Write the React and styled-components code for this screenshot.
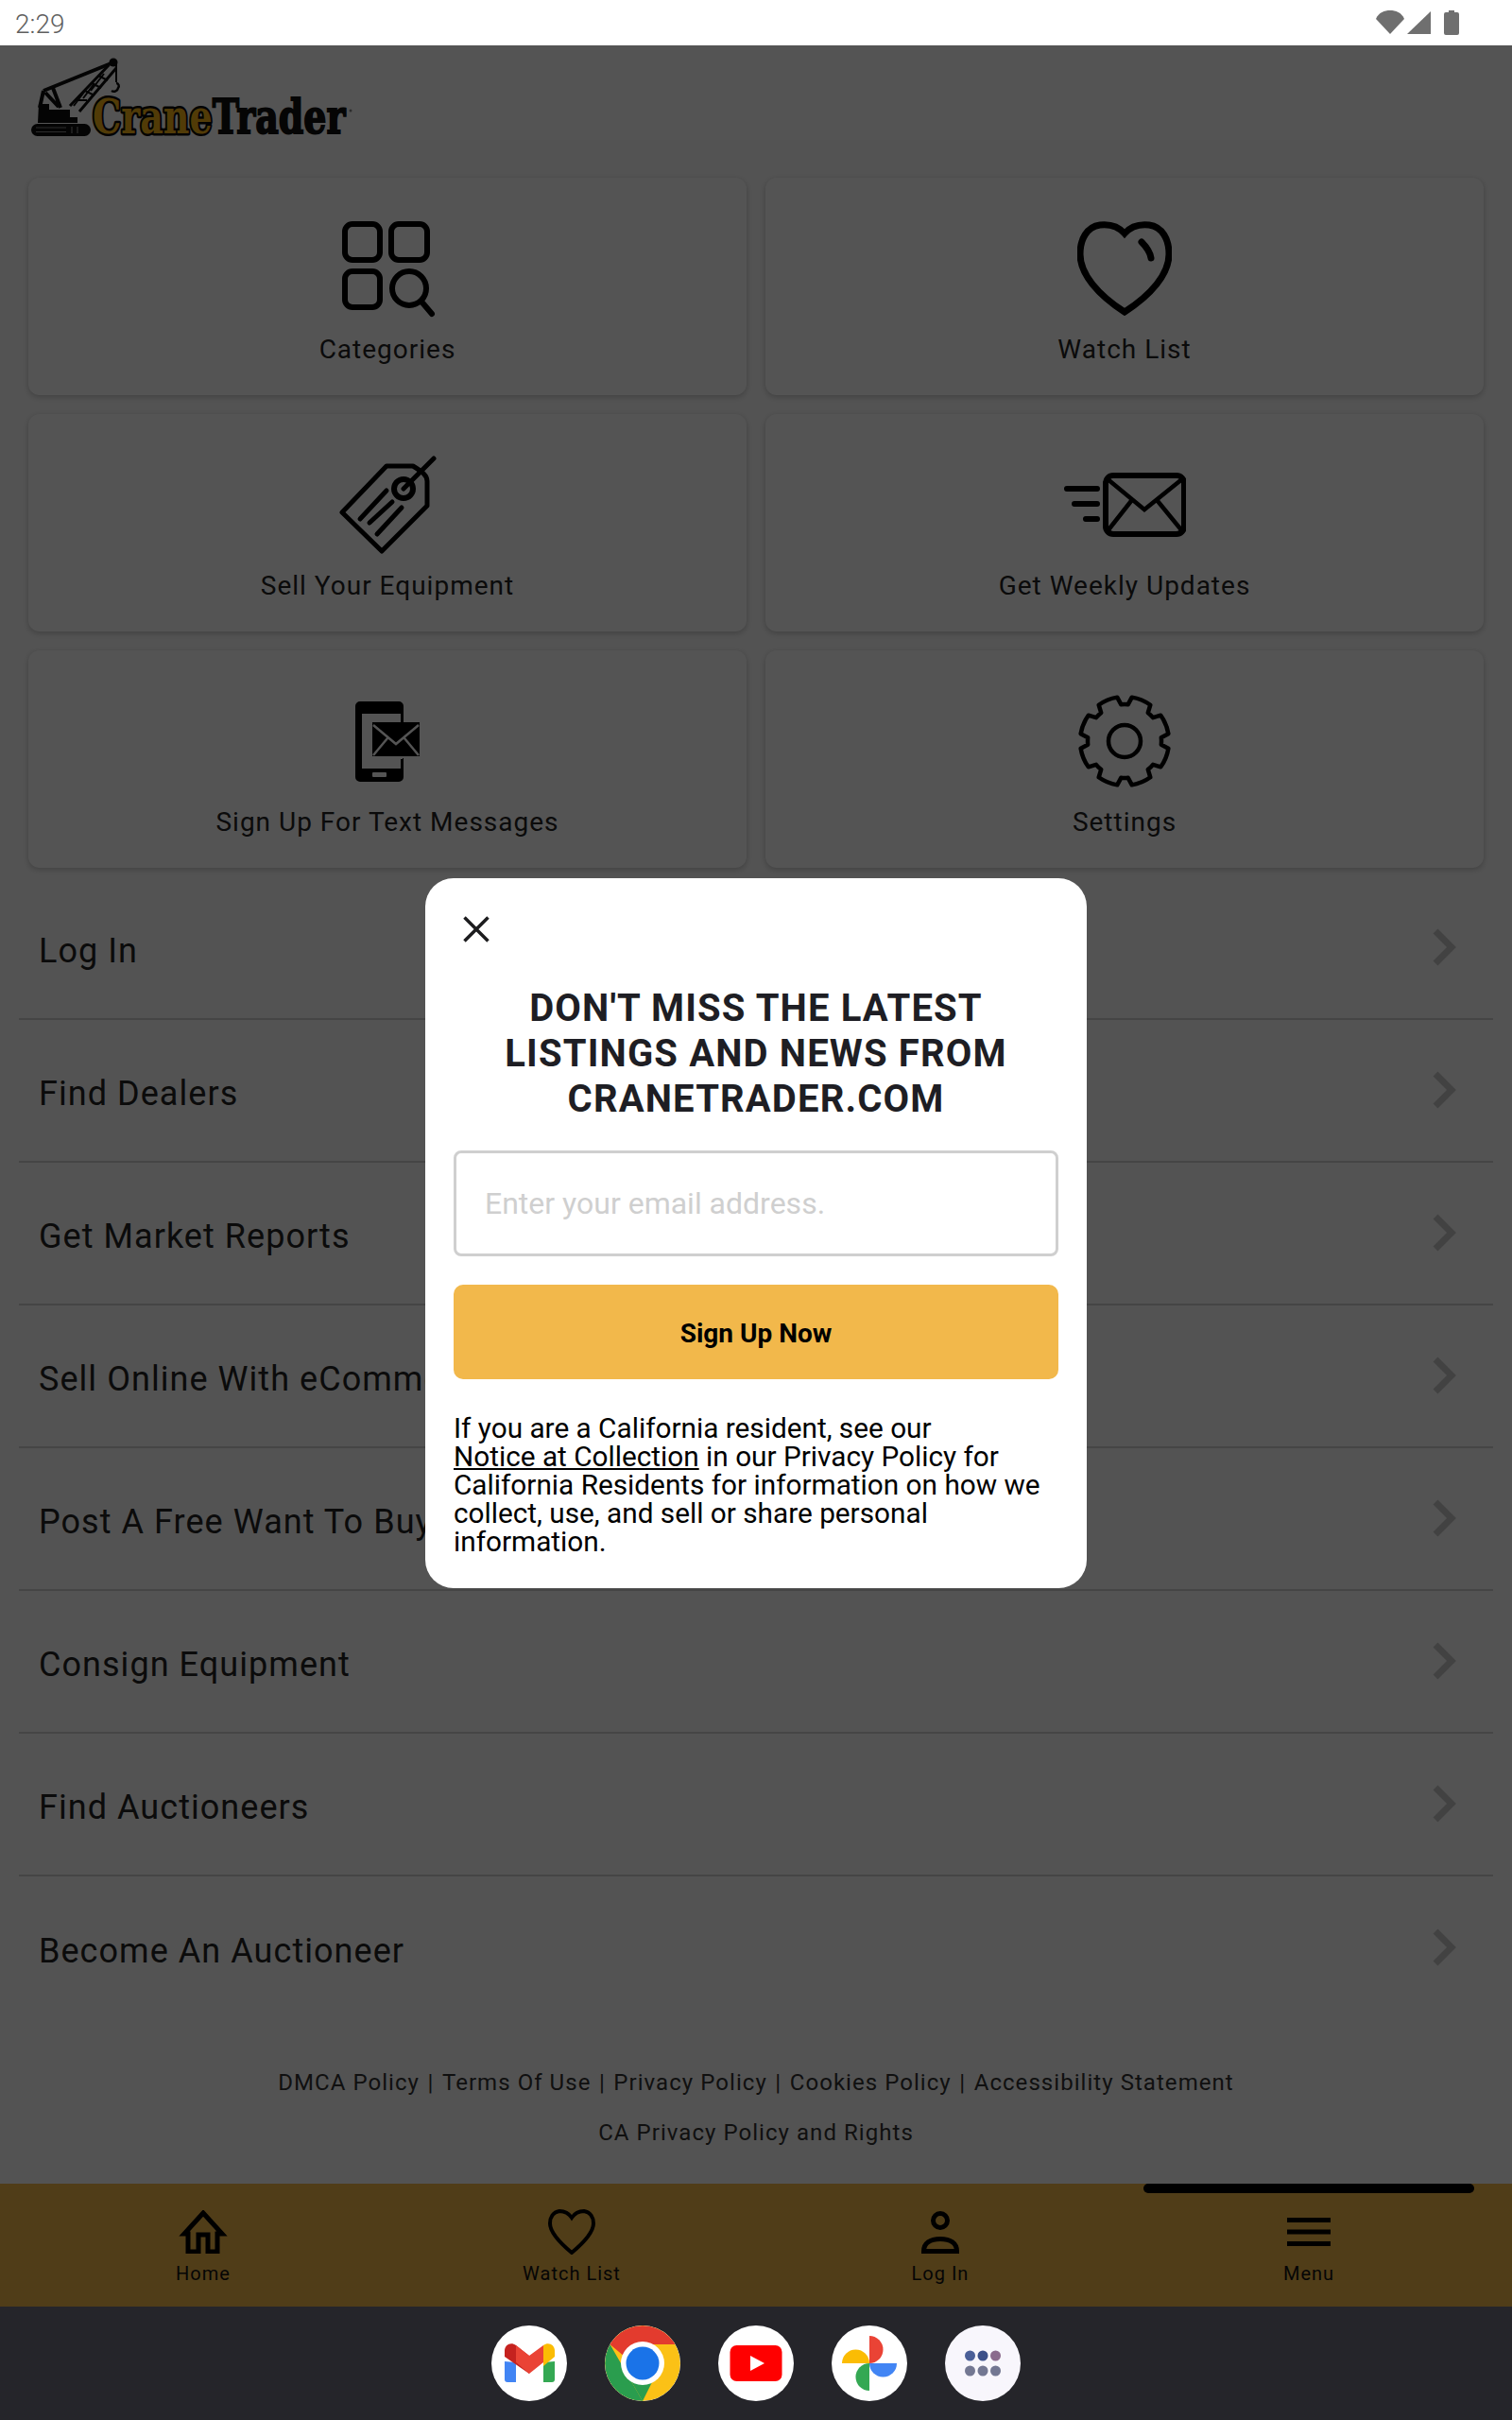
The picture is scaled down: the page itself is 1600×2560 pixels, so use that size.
import React from 'react'
import styled, { createGlobalStyle } from 'styled-components'

const GlobalStyle = createGlobalStyle`
  html, body {
    margin: 0;
    padding: 0;
    background: #25252a;
  }
  * {
    box-sizing: border-box;
  }
  body {
    font-family: Roboto, "Liberation Sans", sans-serif;
  }
`

const Page = styled.div`
  width: 1600px;
  height: 2560px;
  display: flex;
  flex-direction: column;
  overflow: hidden;
`

const StatusBar = styled.div`
  height: 48px;
  flex: none;
  background: #fff;
  display: flex;
  align-items: center;
  justify-content: space-between;
  padding: 0 56px 0 16px;
  color: #5f5f5f;
  font-size: 28px;
  font-weight: 300;
`

const StatusTime = styled.span`
  padding-top: 3px;
`

const Screen = styled.main`
  position: relative;
  height: 2392px;
  flex: none;
  background: #fbfbfb;
  display: flex;
  flex-direction: column;
`

const Header = styled.header`
  height: 100px;
  flex: none;
  background: #fff;
  padding: 12px 0 0 30px;
`

const CardGrid = styled.section`
  display: grid;
  grid-template-columns: 1fr 1fr;
  grid-auto-rows: 230px;
  gap: 20px;
  padding: 40px 30px 10px;
`

const Card = styled.a`
  background: #fff;
  border-radius: 12px;
  box-shadow: 0 2px 6px rgba(0, 0, 0, 0.22);
  padding-top: 46px;
  display: flex;
  flex-direction: column;
  align-items: center;
`

const IconSlot = styled.div`
  height: 100px;
  display: flex;
  align-items: center;
  justify-content: center;
`

const CardLabel = styled.span`
  margin-top: 19px;
  color: #222;
  font-size: 28px;
  line-height: 33px;
  letter-spacing: 1px;
`

const List = styled.ul`
  list-style: none;
  margin: 0;
  padding: 0 20px;
`

const Row = styled.li`
  height: 151px;
  display: flex;
  align-items: center;
  justify-content: space-between;
  padding: 0 38px 1px 21px;
  border-bottom: ${p => (p.$last ? 'none' : '2px solid #d2d2d2')};
  color: #222;
  font-size: 36px;
  letter-spacing: 1.05px;
`

const RowLabel = styled.span`
  padding-top: 7px;
`

const Footer = styled.footer`
  margin-top: 52px;
  display: flex;
  flex-direction: column;
  align-items: center;
  gap: 23px;
  color: #333;
  font-size: 24px;
  line-height: 30px;
  letter-spacing: 1.05px;
`

const FooterLine = styled.div`
  display: flex;
  align-items: center;
`

const Pipe = styled.span`
  margin: 0 8.5px;
`

const TabBar = styled.nav`
  margin-top: auto;
  height: 130px;
  flex: none;
  background: #f2b84b;
  display: grid;
  grid-template-columns: repeat(4, 1fr);
  padding: 0 20px;
`

const Tab = styled.a`
  position: relative;
  display: flex;
  flex-direction: column;
  align-items: center;
  padding-top: 26px;
  color: #111;
  font-size: 20px;
  line-height: 24px;
  letter-spacing: 1px;
`

const ActiveBar = styled.span`
  position: absolute;
  top: 0;
  left: 20px;
  right: 20px;
  height: 10px;
  border-radius: 5px;
  background: #000;
`

const TabIcon = styled.div`
  height: 50px;
  margin-bottom: 7px;
  display: flex;
  align-items: center;
  justify-content: center;
`

const Scrim = styled.div`
  position: absolute;
  inset: 0;
  background: rgba(0, 0, 0, 0.67);
`

const Modal = styled.section`
  position: absolute;
  top: 881px;
  left: 450px;
  width: 700px;
  height: 751px;
  background: #fff;
  border-radius: 30px;
  padding: 40px 30px 0;
`

const CloseButton = styled.button`
  display: block;
  width: 28px;
  height: 28px;
  margin-left: 10px;
  padding: 0;
  border: 0;
  background: none;
`

const Title = styled.h2`
  margin: 46px 0 0;
  color: #1e1e24;
  font-size: 40px;
  line-height: 48px;
  font-weight: 700;
  letter-spacing: 1.15px;
  text-align: center;
`

const EmailInput = styled.input`
  display: block;
  width: 100%;
  height: 112px;
  margin-top: 30px;
  padding: 0 30px;
  border: 3px solid #cfcfcf;
  border-radius: 8px;
  background: #fff;
  font-family: inherit;
  font-size: 32px;
  letter-spacing: 0;
  &::placeholder {
    color: #cfcfcf;
    opacity: 1;
  }
`

const SignUpButton = styled.button`
  display: block;
  width: 100%;
  height: 100px;
  margin-top: 30px;
  padding: 2px 0 0;
  border: 0;
  border-radius: 10px;
  background: #f2b84b;
  color: #000;
  font-family: inherit;
  font-size: 28px;
  font-weight: 700;
`

const Notice = styled.p`
  margin: 37px 0 0;
  color: #000;
  font-size: 29.75px;
  line-height: 30px;
`

const NoticeLink = styled.a`
  display: inline-block;
  text-decoration: underline;
`

const Dock = styled.div`
  flex: 1;
  background: #25252a;
  display: flex;
  align-items: center;
  justify-content: center;
  gap: 40px;
`

const DockIcon = styled.div`
  width: 80px;
  height: 80px;
  border-radius: 50%;
  overflow: hidden;
  background: ${p => p.$bg || '#fff'};
`

const LogoText = styled.text`
  font-family: "DejaVu Serif", "Liberation Serif", serif;
  font-weight: 700;
  font-size: 50px;
`

const StatusIcons = () => (
  <svg width="90" height="30" viewBox="0 0 90 30">
    <path d="M2 11 C5 4 11 2 17 2 C23 2 29 4 32 11 L17 27 Z" fill="#6f6f6f" />
    <path d="M35 27 L60 3 V27 Z" fill="#6f6f6f" />
    <path d="M74 6 a2 2 0 0 1 2 -2 h3 v-2 h6 v2 h3 a2 2 0 0 1 2 2 v20 a2 2 0 0 1 -2 2 h-12 a2 2 0 0 1 -2 -2 Z" fill="#6f6f6f" />
  </svg>
)

const Logo = () => (
  <svg width="345" height="85" viewBox="0 0 345 85">
    <g stroke="#0d0d0d" fill="none">
      <path d="M16 36 L90 6" strokeWidth="4" />
      <path d="M44 52 L85 9 M54 58 L93 12" strokeWidth="3" />
      <path d="M50 46 L62 46 M60 36 L70 41 M67 28 L77 33 M74 20 L84 25 M48 52 L60 36 M58 44 L70 28 M66 36 L80 18" strokeWidth="2" />
      <path d="M16 36 L12 54 M18 38 L32 53 M26 33 L34 54" strokeWidth="4" />
      <path d="M93 7 V27" strokeWidth="2" />
      <path d="M93 28 a3 3 0 0 1 2 5 a4.5 4.5 0 0 1 -7 3" strokeWidth="2.5" />
    </g>
    <circle cx="90" cy="6" r="4.5" fill="#0d0d0d" />
    <path d="M11 50 H22 V56 H44 V64 H52 V70 H10 Z" fill="#0d0d0d" />
    <rect x="3" y="71" width="63" height="13" rx="6.5" fill="#0d0d0d" />
    <path d="M8 75 H40 M8 79.500 H40 M46 74 V81 M52 74 V81" stroke="#888" strokeWidth="1.2" />
    <LogoText transform="translate(68 81) scale(.76 1)">
      <tspan fill="#f5b318" stroke="#0b0b0b" strokeWidth="5" paintOrder="stroke" strokeLinejoin="round">Crane</tspan>
      <tspan fill="#111" stroke="#111" strokeWidth="2">Trader</tspan>
    </LogoText>
    <circle cx="341" cy="57" r="1.5" fill="#888" />
  </svg>
)

const CategoriesIcon = () => (
  <svg width="104" height="104" viewBox="0 0 104 104" fill="none" stroke="#000" strokeWidth="6">
    <rect x="7" y="5" width="37" height="38" rx="8" />
    <rect x="56" y="5" width="38" height="38" rx="8" />
    <rect x="7" y="55" width="37" height="38" rx="8" />
    <circle cx="75" cy="73" r="18" />
    <path d="M88 87 L99 100" strokeLinecap="round" />
  </svg>
)

const HeartIcon = () => (
  <svg width="100" height="100" viewBox="0 0 100 100" fill="none" stroke="#000" strokeWidth="7">
    <path d="M50 13 C43 5 33 3 24 4 C10 6 3 19 3 35 C3 56 22 78 50 96 C78 78 97 56 97 35 C97 19 90 6 76 4 C67 3 57 5 50 13 Z" />
    <path d="M68 22 C73 27 77 32 78 39" strokeLinecap="round" />
  </svg>
)

const TagIcon = () => (
  <svg width="104" height="104" viewBox="0 0 104 104" fill="none" stroke="#000" strokeWidth="5" strokeLinejoin="round">
    <path d="M4 60 L46 101 L94 53 V27 C94 21 89 17 79 11 L51 11 Z" />
    <circle cx="69" cy="35" r="10" strokeWidth="6" />
    <path d="M69 35 L101 3" strokeLinecap="round" strokeWidth="5" />
    <path d="M23 67 L51 37 M33 71 L57 49 M41 83 L67 55" strokeLinecap="round" />
  </svg>
)

const MailFastIcon = () => (
  <svg width="130" height="70" viewBox="0 0 130 70" fill="none" stroke="#000" strokeWidth="6">
    <rect x="45" y="4" width="83" height="62" rx="8" />
    <path d="M46 7 L86 40 L127 7 M46 64 L72 31 M127 64 L100 31" strokeWidth="4.5" />
    <path d="M4 18 H36 M12 34 H36 M24 50 H36" strokeLinecap="round" strokeWidth="6" />
  </svg>
)

const PhoneMailIcon = () => (
  <svg width="80" height="88" viewBox="0 0 80 88" fill="none">
    <path d="M11 2 H52 a5 5 0 0 1 5 5 V82 a5 5 0 0 1 -5 5 H11 a5 5 0 0 1 -5 -5 V7 a5 5 0 0 1 5 -5 Z M13 15 V73 H54 V15 Z" fill="#000" fillRule="evenodd" />
    <rect x="48" y="24" width="8" height="39" fill="#fff" />
    <rect x="24" y="16" width="26" height="10" fill="#fff" />
    <rect x="24" y="26" width="50" height="34" fill="#000" />
    <path d="M25 27 L49 47 L73 27 M25 59 L40 41 M73 59 L58 41" stroke="#fff" strokeWidth="2.5" />
    <rect x="24" y="60" width="50" height="2" fill="#fff" />
    <rect x="24" y="24" width="50" height="2" fill="#000" />
    <rect x="24" y="77" width="15" height="5" rx="1" fill="#fff" />
  </svg>
)

// 8 tooth outline, tips are arcs and the notches sit on the axes
const gearPath = () => {
  const pt = (r, deg) => {
    const a = (deg * Math.PI) / 180
    return `${(50 + r * Math.cos(a)).toFixed(2)} ${(50 + r * Math.sin(a)).toFixed(2)}`
  }
  let d = ''
  for (let i = 0; i < 8; i++) {
    const c = i * 45 + 22.5
    d += `${i === 0 ? 'M' : 'L'}${pt(39, c - 17)} L${pt(47, c - 13)} A47 47 0 0 1 ${pt(47, c + 13)} L${pt(39, c + 17)} A39 39 0 0 1 ${pt(39, c + 28)} `
  }
  return d + 'Z'
}

const GearIcon = () => (
  <svg width="100" height="100" viewBox="0 0 100 100" fill="none" stroke="#000" strokeWidth="4.500" strokeLinejoin="round">
    <path d={gearPath()} />
    <circle cx="50" cy="50" r="17" />
  </svg>
)

const Chevron = () => (
  <svg width="26" height="40" viewBox="0 0 26 40" fill="none" stroke="#c8c8c8" strokeWidth="7">
    <path d="M3 3 L20 20 L3 37" />
  </svg>
)

const HomeTabIcon = () => (
  <svg width="52" height="46" viewBox="0 0 52 46" fill="none" stroke="#000" strokeWidth="5">
    <path d="M26 3 L46 25 H41 V44 H31 V26 H21 V44 H10 V25 H6 Z" />
  </svg>
)

const HeartTabIcon = () => (
  <svg width="52" height="48" viewBox="0 0 52 48" fill="none" stroke="#000" strokeWidth="4">
    <path d="M26 9 C22 3 17 2 13 2 C6 3 3 9 3 15 C3 25 14 36 26 46 C38 36 49 25 49 15 C49 9 46 3 39 2 C35 2 30 3 26 9 Z" />
  </svg>
)

const PersonTabIcon = () => (
  <svg width="42" height="46" viewBox="0 0 42 46" fill="none" stroke="#000" strokeWidth="5">
    <circle cx="21" cy="11" r="7.5" />
    <path d="M3.5 43.5 C3.5 35 10 30.500 21 30.500 C32 30.500 38.500 35 38.500 43.5 Z" />
  </svg>
)

const MenuTabIcon = () => (
  <svg width="46" height="30" viewBox="0 0 46 30" fill="#000">
    <rect width="46" height="5" />
    <rect y="12.500" width="46" height="5" />
    <rect y="25" width="46" height="5" />
  </svg>
)

const CloseIcon = () => (
  <svg width="28" height="28" viewBox="0 0 28 28" fill="none" stroke="#1c1c1e" strokeWidth="3.5">
    <path d="M1.500 1.500 L26.500 26.500 M26.500 1.500 L1.500 26.500" />
  </svg>
)

const GmailIcon = () => (
  <svg width="80" height="80" viewBox="0 0 80 80">
    <path d="M14 38 V57 a3 3 0 0 0 3 3 H26 V39 Z" fill="#4285f4" />
    <path d="M55 39 V60 H64 a3 3 0 0 0 3 -3 V38 Z" fill="#34a853" />
    <path d="M14 27 C14 20 21 17 26 21 L40 32 L40 51 L14 33 Z" fill="#c5221f" />
    <path d="M26 21 L40 32 L55 21 V39 L40 51 L26 39 Z" fill="#ea4335" />
    <path d="M55 21 C60 17 67 20 67 27 V33 L55 43 Z" fill="#fbbc04" />
  </svg>
)

const ChromeIcon = () => (
  <svg width="80" height="80" viewBox="0 0 80 80">
    <circle cx="40" cy="40" r="40" fill="#fbc116" />
    <path d="M5.500 20 A40 40 0 0 1 74.500 20 H40 A20 20 0 0 0 21 33 Z" fill="#e33b2e" />
    <path d="M5.500 20 L21 47 L40 80 A40 40 0 0 1 5.500 20 Z" fill="#2a9d4e" />
    <path d="M21 47 A22 22 0 0 0 50 60 L40 80 Z" fill="#2a9d4e" />
    <circle cx="40" cy="40" r="23" fill="#fff" />
    <circle cx="40" cy="40" r="17.500" fill="#1a73e8" />
  </svg>
)

const YoutubeIcon = () => (
  <svg width="80" height="80" viewBox="0 0 80 80">
    <rect x="12.500" y="21" width="55" height="38" rx="7" fill="#f00" />
    <path d="M34 32 L49 40 L34 48 Z" fill="#fff" />
  </svg>
)

const PhotosIcon = () => (
  <svg width="80" height="80" viewBox="0 0 80 80">
    <path d="M40 11 A14.500 14.500 0 0 1 40 40 Z" fill="#ea4335" />
    <path d="M11 40 A14.500 14.500 0 0 1 40 40 Z" fill="#fbbc04" />
    <path d="M40 40 H69 A14.500 14.500 0 0 1 40 40 Z" fill="#4285f4" />
    <path d="M40 69 A14.500 14.500 0 0 1 40 40 Z" fill="#34a853" />
  </svg>
)

const AppsIcon = () => (
  <svg width="80" height="80" viewBox="0 0 80 80">
    <circle cx="26.500" cy="32" r="5.500" fill="#4a5f98" />
    <circle cx="40" cy="32" r="5.500" fill="#3c5089" />
    <circle cx="53.500" cy="32" r="5.500" fill="#8b6b8d" />
    <circle cx="26.500" cy="48" r="5.500" fill="#737792" />
    <circle cx="40" cy="48" r="5.500" fill="#737792" />
    <circle cx="53.500" cy="48" r="5.500" fill="#737792" />
  </svg>
)

const cards = [
  { label: 'Categories', icon: <CategoriesIcon /> },
  { label: 'Watch List', icon: <HeartIcon /> },
  { label: 'Sell Your Equipment', icon: <TagIcon /> },
  { label: 'Get Weekly Updates', icon: <MailFastIcon /> },
  { label: 'Sign Up For Text Messages', icon: <PhoneMailIcon /> },
  { label: 'Settings', icon: <GearIcon /> }
]

const rows = [
  'Log In',
  'Find Dealers',
  'Get Market Reports',
  'Sell Online With eCommerce',
  'Post A Free Want To Buy',
  'Consign Equipment',
  'Find Auctioneers',
  'Become An Auctioneer'
]

const policies = ['DMCA Policy', 'Terms Of Use', 'Privacy Policy', 'Cookies Policy', 'Accessibility Statement']

const tabs = [
  { label: 'Home', icon: <HomeTabIcon /> },
  { label: 'Watch List', icon: <HeartTabIcon /> },
  { label: 'Log In', icon: <PersonTabIcon /> },
  { label: 'Menu', icon: <MenuTabIcon />, active: true }
]

export default function App () {
  return (
    <Page>
      <GlobalStyle />
      <StatusBar>
        <StatusTime>2:29</StatusTime>
        <StatusIcons />
      </StatusBar>
      <Screen>
        <Header>
          <Logo />
        </Header>
        <CardGrid>
          {cards.map(card => (
            <Card key={card.label}>
              <IconSlot>{card.icon}</IconSlot>
              <CardLabel>{card.label}</CardLabel>
            </Card>
          ))}
        </CardGrid>
        <List>
          {rows.map((row, i) => (
            <Row key={row} $last={i === rows.length - 1}>
              <RowLabel>{row}</RowLabel>
              <Chevron />
            </Row>
          ))}
        </List>
        <Footer>
          <FooterLine>
            {policies.map((policy, i) => (
              <React.Fragment key={policy}>
                {i > 0 && <Pipe>|</Pipe>}
                {policy}
              </React.Fragment>
            ))}
          </FooterLine>
          <FooterLine>CA Privacy Policy and Rights</FooterLine>
        </Footer>
        <TabBar>
          {tabs.map(tab => (
            <Tab key={tab.label}>
              {tab.active && <ActiveBar />}
              <TabIcon>{tab.icon}</TabIcon>
              {tab.label}
            </Tab>
          ))}
        </TabBar>
        <Scrim />
        <Modal>
          <CloseButton aria-label="Close">
            <CloseIcon />
          </CloseButton>
          <Title>DON'T MISS THE LATEST LISTINGS AND NEWS FROM CRANETRADER.COM</Title>
          <EmailInput placeholder="Enter your email address." />
          <SignUpButton>Sign Up Now</SignUpButton>
          <Notice>
            If you are a California resident, see our <NoticeLink>Notice at Collection</NoticeLink> in our Privacy Policy for California Residents for information on how we collect, use, and sell or share personal information.
          </Notice>
        </Modal>
      </Screen>
      <Dock>
        <DockIcon><GmailIcon /></DockIcon>
        <DockIcon><ChromeIcon /></DockIcon>
        <DockIcon><YoutubeIcon /></DockIcon>
        <DockIcon><PhotosIcon /></DockIcon>
        <DockIcon $bg="#f8f6fc"><AppsIcon /></DockIcon>
      </Dock>
    </Page>
  )
}
